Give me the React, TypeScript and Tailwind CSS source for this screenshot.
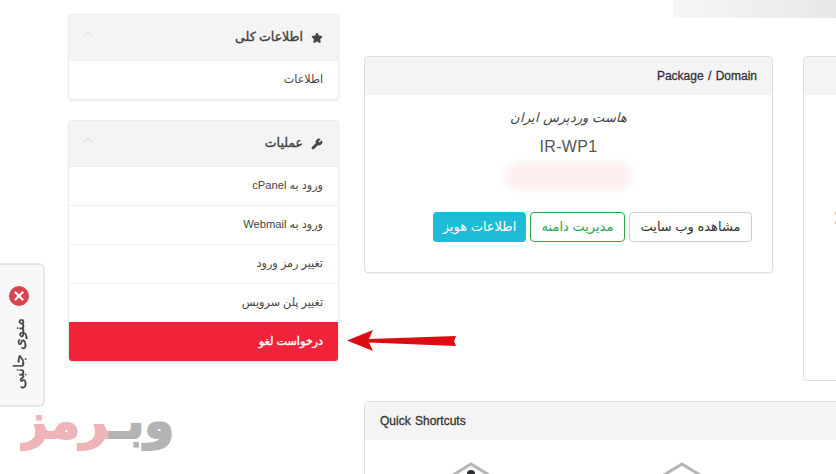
import { Star, Wrench, ChevronUp, X } from 'lucide-react';

const OPERATIONS = ['ورود به cPanel', 'ورود به Webmail', 'تغییر رمز ورود', 'تغییر پلن سرویس'];

const SidePanel = ({ title, icon, children }: { title: string; icon: React.ReactNode; children: React.ReactNode }) => (
  <div className="overflow-hidden rounded border border-[#ececec] bg-white shadow-[0_1px_2px_rgba(0,0,0,0.08)]">
    <div className="flex h-[45px] items-center justify-between bg-[#f4f4f4] pl-[11px] pr-[15px]">
      <ChevronUp className="h-4 w-4 -translate-y-[4px] text-[#e2e2e2]" />
      <div dir="rtl" className="flex items-center gap-2 text-[12.5px] text-[#444] [-webkit-text-stroke:0.4px_#444]">
        {icon}
        {title}
      </div>
    </div>
    {children}
  </div>
);

const MenuRow = ({ label }: { label: string }) => (
  <div dir="rtl" className="flex h-[39px] items-center border-t border-[#f0f0f0] px-[15px] pb-[2px] text-[11.2px] text-[#444] first:border-t-0">
    {label}
  </div>
);

export default function App() {
  return (
    <div className="relative flex h-[474px] w-[836px] overflow-hidden bg-white pl-[68px] font-['Liberation_Sans','DejaVu_Sans',sans-serif]">
      <aside className="flex w-[271px] shrink-0 flex-col gap-5 pt-[14px]">
        <SidePanel title="اطلاعات کلی" icon={<Star className="h-3 w-3 fill-[#444] text-[#444]" />}>
          <MenuRow label="اطلاعات" />
        </SidePanel>
        <SidePanel title="عملیات" icon={<Wrench className="h-3 w-3 fill-[#444] text-[#444]" />}>
          {OPERATIONS.map((op) => (
            <MenuRow key={op} label={op} />
          ))}
          <div dir="rtl" className="flex h-[39px] items-center bg-[#f0233a] px-[15px] text-[11.2px] text-white [-webkit-text-stroke:0.4px_#fff]">
            درخواست لغو
          </div>
        </SidePanel>
      </aside>

      <main className="ml-[25px] flex w-[472px] shrink-0 flex-col">
        <div className="ml-auto h-[18px] w-[163px] shrink-0 bg-gradient-to-r from-[#f6f6f6] to-[#e6e8e8]" />

        <div className="mt-[38px] flex shrink-0 gap-[30px]">
          <section className="h-[217px] w-[409px] shrink-0 overflow-hidden rounded border border-[#dedede] bg-white shadow-[0_1px_1px_rgba(0,0,0,0.05)]">
            <div className="flex h-[38px] items-center justify-end bg-[#f4f4f4] px-[15px] text-[12px] text-[#333] [-webkit-text-stroke:0.3px_#333] [word-spacing:1px]">
              Package / Domain
            </div>
            <div className="flex flex-col items-center pt-[13px]">
              <div dir="rtl" className="text-[13px] italic leading-[20px] text-[#444]">هاست وردپرس ایران</div>
              <div className="mt-[9px] text-[16px] leading-[20px] tracking-[0.3px] text-[#555]">IR-WP1</div>
              <div className="mt-[6px] h-[26px] w-[126px] rounded-full bg-[#fdeeee] blur-[4px]" />
              <div dir="rtl" className="mr-[20px] mt-[23px] flex gap-[4px] self-end text-[13px]">
                <button className="h-[30px] w-[123px] rounded border border-[#ccc] bg-white text-[#333]">مشاهده وب سایت</button>
                <button className="h-[30px] w-[95px] rounded border border-[#28a745] bg-white text-[#28a745]">مدیریت دامنه</button>
                <button className="h-[30px] w-[93px] rounded bg-[#1fbcd8] text-white">اطلاعات هویز</button>
              </div>
            </div>
          </section>
          <section className="h-[325px] w-[300px] shrink-0 overflow-hidden rounded border border-[#dedede] bg-white">
            <div className="h-[38px] bg-[#f4f4f4]" />
            <div className="ml-[31px] mt-[117px] flex w-px flex-col gap-[6px]">
              <div className="h-[3px] bg-[#e6c48a]" />
              <div className="h-[3px] bg-[#e6c48a]" />
            </div>
          </section>
        </div>

        <section className="mt-5 w-[600px] shrink-0 rounded border border-[#dedede] bg-white">
          <div className="flex h-[38px] items-center bg-[#f4f4f4] px-[15px] text-[12px] text-[#333] [-webkit-text-stroke:0.3px_#333] [word-spacing:1px]">
            Quick Shortcuts
          </div>
          <div className="flex gap-[167px] pl-[84px] pt-[22px]">
            <svg width="44" height="44" viewBox="0 0 44 44" fill="none">
              <path d="M0 15.4 22 2l22 13.4" stroke="#b5b5b5" strokeWidth="3" />
              <circle cx="22" cy="12" r="4" fill="#2b2f33" />
            </svg>
            <svg width="44" height="44" viewBox="0 0 44 44" fill="none">
              <path d="M0 15.4 22 2l22 13.4" stroke="#b5b5b5" strokeWidth="3" />
            </svg>
          </div>
        </section>
      </main>

      {/* side menu tab */}
      <div className="absolute left-[-6px] top-[263px] flex h-[144px] w-[51px] flex-col items-start rounded-md border-2 border-[#e6e6e6] bg-[#f8f8f8] pl-[13px] pt-[21px]">
        <span className="flex h-5 w-5 items-center justify-center rounded-full bg-[#d9434e]">
          <X className="h-3.5 w-3.5 text-white" strokeWidth={4} />
        </span>
        <span dir="rtl" className="ml-[-2px] mt-[12px] rotate-180 whitespace-nowrap text-[15px] leading-[24px] text-[#444] [-webkit-text-stroke:0.4px_#444] [writing-mode:vertical-rl]">منوی جانبی</span>
      </div>

      {/* arrow pointing at the cancel row */}
      <svg className="absolute left-[346px] top-[329px]" width="112" height="24" viewBox="0 0 112 24">
        <path d="M1 11.5 27 1l-4 9 87-3-2 5 2 5-87-3.5 4 8.5z" fill="#d90d12" />
      </svg>

      {/* watermark */}
      <div className="absolute left-[20px] top-[405px] h-[48px] w-[154px] overflow-hidden">
        <div dir="rtl" className="-mt-[18px] whitespace-nowrap text-[48px] font-bold leading-[70px] [-webkit-text-stroke:2px]">
          <span className="text-[#b3b3b3]">وبـ</span>
          <span className="text-[#eeb4b7]">رمز</span>
        </div>
      </div>
    </div>
  );
}
